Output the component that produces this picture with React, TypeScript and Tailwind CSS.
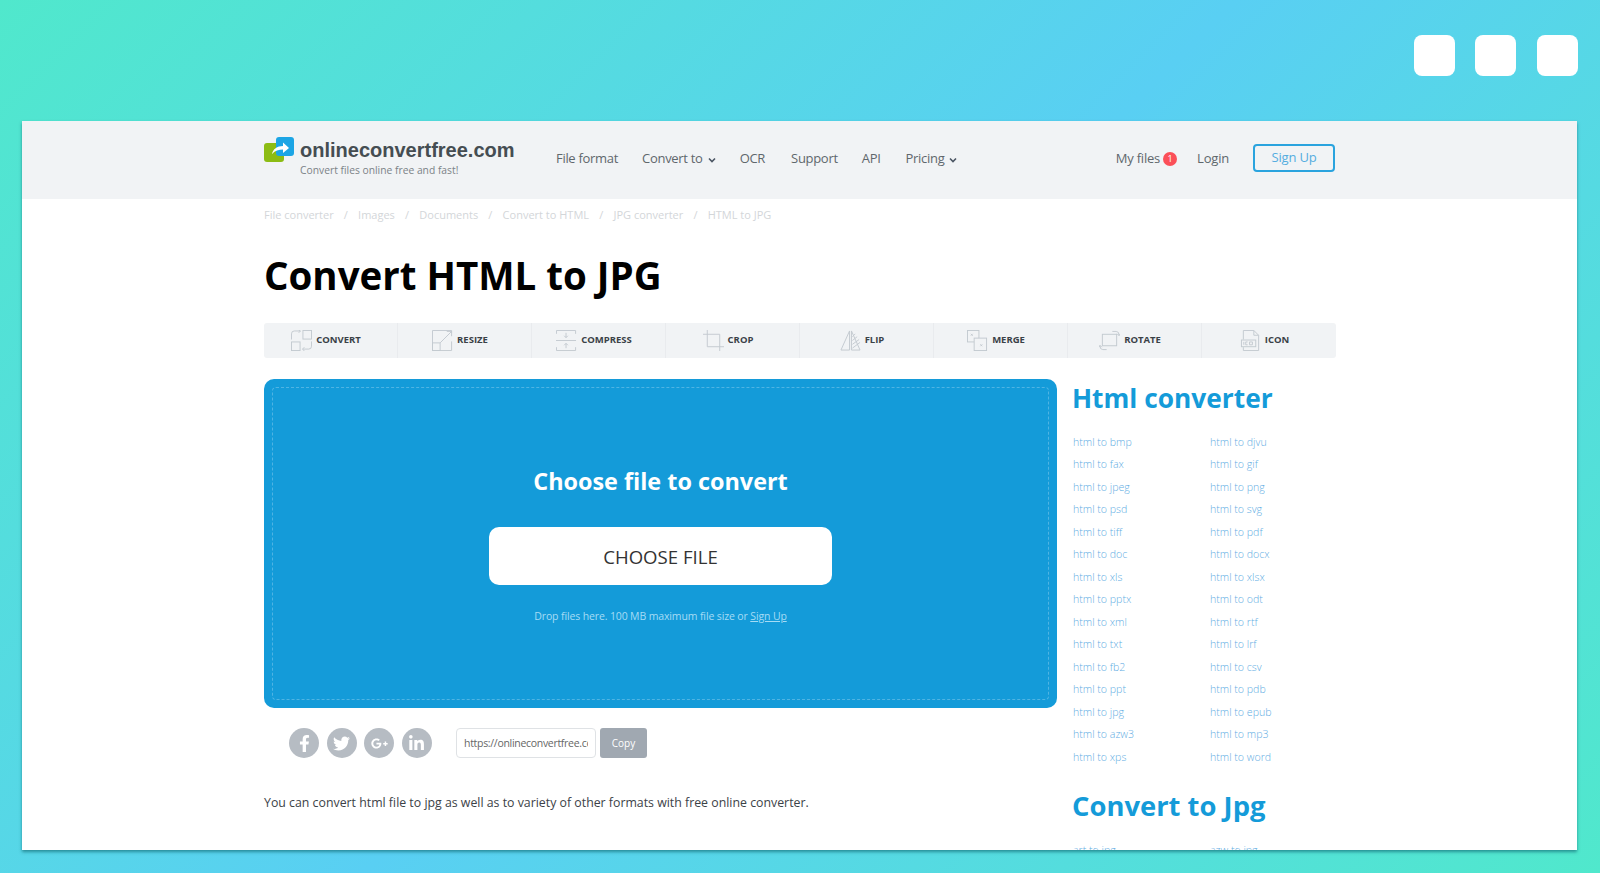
import { FaFacebookF, FaTwitter, FaGooglePlusG, FaLinkedinIn } from 'react-icons/fa';

const stroke = '#c3cad0';

function LogoMark() {
  return (
    <svg width="30" height="25" viewBox="0 0 30 25" className="shrink-0">
      <rect x="0" y="6" width="20" height="19" rx="3" fill="#8cbc14" />
      <rect x="12" y="0" width="18" height="19" rx="3" fill="#1ca5e5" />
      <path d="M8 17c1-5 5-8 11-8V5.500l6 5.500-6 5v-3.500c-4 0-8 1-11 4.500z" fill="#fff" />
    </svg>
  );
}

function TabIcon({ name }: { name: string }) {
  const common = { fill: 'none', stroke, strokeWidth: 1 };
  return (
    <svg width="21" height="21" viewBox="0 0 22 22" className="shrink-0">
      {name === 'convert' && (
        <g {...common}>
          <rect x="12.500" y="0.500" width="9" height="9" />
          <rect x="0.500" y="12.500" width="9" height="9" />
          <path d="M0.500 10V4q0-3 3-3h6M8 0l2 1-2 2M21.500 12v5q0 3-3 3h-6M14 18l-2 2 2 2" />
        </g>
      )}
      {name === 'resize' && (
        <g {...common}>
          <path d="M20.500 12v9.500H0.500V0.500H20.500V3" />
          <rect x="0.500" y="13.500" width="8" height="8" />
          <path d="M8.500 13.500L20.500 1.500M15.500 1.500h5v5" />
        </g>
      )}
      {name === 'compress' && (
        <g {...common}>
          <path d="M0.500 4V0.500h20V4M0.500 18v3.500h20V18M0 11h21M10.500 3v5M8.500 6l2 2 2-2M10.500 19v-5M8.500 16l2-2 2 2" />
        </g>
      )}
      {name === 'crop' && (
        <g {...common}>
          <path d="M4.500 0v17.500H22M0 4.500h17.500V22" />
        </g>
      )}
      {name === 'flip' && (
        <g {...common}>
          <path d="M10 1L1 21h9zM12 1l9 20h-9z" />
          <path d="M13 7l3-3M13 11l5-4M13 15l7-5M13 19l8-6" />
        </g>
      )}
      {name === 'merge' && (
        <g {...common}>
          <rect x="0.500" y="0.500" width="12" height="12" />
          <rect x="7.500" y="8.500" width="13" height="13" fill="#f1f3f5" />
          <path d="M4 4l2 2M6 4L4 6M14 15l2 2M16 15l-2 2" />
        </g>
      )}
      {name === 'rotate' && (
        <g {...common}>
          <rect x="3.500" y="4.500" width="15" height="12" />
          <path d="M14 1.500h4q3 0 3 4M19 4l2 2 1-2M8 20.500H4q-3 0-3-4M3 18l-2-2-1 2" />
        </g>
      )}
      {name === 'icon' && (
        <g {...common}>
          <path d="M3.500 10V0.500h11l5 5V21.500H3.500V18M14.500 0.500v5h5" />
          <rect x="1.500" y="10.500" width="15" height="7" />
          <path d="M4 12.500v3M6 12.500h2M6 15.500h2M6 12.500v3M10 12.500h3v3h-3z" />
        </g>
      )}
    </svg>
  );
}

const tabs = ['convert', 'resize', 'compress', 'crop', 'flip', 'merge', 'rotate', 'icon'];
const crumbs = ['File converter', 'Images', 'Documents', 'Convert to HTML', 'JPG converter', 'HTML to JPG'];
const htmlLinks = [
  'bmp', 'djvu', 'fax', 'gif', 'jpeg', 'png', 'psd', 'svg', 'tiff', 'pdf', 'doc', 'docx', 'xls', 'xlsx', 'pptx',
  'odt', 'xml', 'rtf', 'txt', 'lrf', 'fb2', 'csv', 'ppt', 'pdb', 'jpg', 'epub', 'azw3', 'mp3', 'xps', 'word',
];
const socials = [FaFacebookF, FaTwitter, FaGooglePlusG, FaLinkedinIn];

function Chevron() {
  return (
    <svg width="8" height="6" viewBox="0 0 8 6" className="ml-[5px] mt-px">
      <path d="M1 1.500l3 3 3-3" fill="none" stroke="#4b5563" strokeWidth="1.600" />
    </svg>
  );
}

export default function App() {
  return (
    <div className="h-[873px] overflow-hidden bg-[linear-gradient(135deg,#50e8cc_0%,#59cff3_50%,#50e8cc_100%)] font-['Open_Sans',sans-serif]">
      <div className="flex h-[121px] justify-end gap-5 pr-[22px] pt-[35px]">
        <div className="h-[41px] w-[41px] rounded-lg bg-white" />
        <div className="h-[41px] w-[41px] rounded-lg bg-white" />
        <div className="ml-px h-[41px] w-[41px] rounded-lg bg-white" />
      </div>

      <div className="ml-[22px] mr-[23px] h-[729px] overflow-hidden bg-white shadow-[0_2px_3px_rgba(20,110,120,0.7)]">
        <header className="h-[78px] bg-[#f1f3f5]">
          <div className="ml-[242px] flex h-full w-[1072px] items-center pb-[2px]">
            <div className="flex w-[292px] items-start self-start pt-4">
              <LogoMark />
              <div className="ml-1.5 mt-[2px]">
                <div className="font-['Liberation_Sans',sans-serif] text-[20px] font-bold leading-[22px] text-[#454d52]">onlineconvertfree.com</div>
                <div className="mt-[2px] text-[10.300px] leading-[14px] text-[#7b8287]">Convert files online free and fast!</div>
              </div>
            </div>
            <nav className="flex items-center text-[13px] tracking-[-0.3px] text-[#5f676c]">
              <span className="mr-6">File format</span>
              <span className="mr-6 flex items-center">Convert to<Chevron /></span>
              <span className="mr-[26px]">OCR</span>
              <span className="mr-6">Support</span>
              <span className="mr-[25px]">API</span>
              <span className="flex items-center">Pricing<Chevron /></span>
            </nav>
            <div className="ml-auto mr-px flex items-center text-[13px] tracking-[-0.2px] text-[#5f676c]">
              <span>My files</span>
              <span className="ml-[3px] flex h-[14px] w-[14px] items-center justify-center rounded-full bg-[#fb4f58] text-[9px] text-white">1</span>
              <span className="ml-5">Login</span>
              <button className="ml-6 -mt-[2px] h-7 w-[82px] rounded-[4px] border-2 border-[#2aa3de] text-[13px] text-[#55ade0]">Sign Up</button>
            </div>
          </div>
        </header>

        <div className="ml-[242px] w-[1072px]">
          <div className="flex h-8 items-center gap-[10.200px] text-[11px] text-[#d3d6d9]">
            {crumbs.map((c, i) => (
              <span key={c} className="flex items-center gap-[10.200px]">
                {i > 0 && <span>/</span>}
                {c}
              </span>
            ))}
          </div>

          <div className="flex h-[92px] items-center pb-1">
            <h1 className="text-[38.500px] font-bold leading-none text-black">Convert HTML to JPG</h1>
          </div>

          <div className="grid h-[35px] grid-cols-8 rounded-[3px] bg-[#f1f3f5]">
            {tabs.map((t, i) => (
              <div key={t} className={`flex items-center justify-center gap-1 pr-[9px] ${i < 7 ? 'border-r border-[#e9ebee]' : ''}`}>
                <TabIcon name={t} />
                <span className="text-[9.500px] font-bold uppercase text-[#3a4147]">{t}</span>
              </div>
            ))}
          </div>

          <div className="mt-[21px] flex gap-4">
            <main className="w-[793px] shrink-0">
              <div className="h-[329px] rounded-[10px] bg-[#149bd9] p-2">
                <div className="flex h-full flex-col items-center rounded-[4px] border border-dashed border-[#4fb4e3] pt-[75px]">
                  <h2 className="h-9 text-[23.400px] font-bold leading-9 text-white">Choose file to convert</h2>
                  <button className="mt-[28px] h-[58px] w-[343px] rounded-[10px] bg-white pt-[2px] text-[18.600px] text-[#333]">CHOOSE FILE</button>
                  <p className="mt-[22px] text-[10.500px] leading-[18px] tracking-[-0.13px] text-[#a5dcf5]">
                    Drop files here. 100 MB maximum file size or <span className="underline">Sign Up</span>
                  </p>
                </div>
              </div>

              <div className="mt-[20px] flex items-center pl-[25px]">
                {socials.map((Icon, i) => (
                  <span key={i} className="mr-[7.500px] flex h-[30px] w-[30px] items-center justify-center rounded-full bg-[#b6bcc3] text-[17px] text-white">
                    <Icon />
                  </span>
                ))}
                <input
                  readOnly
                  value="https://onlineconvertfree.com/"
                  className="ml-[17px] h-[30px] w-[140px] rounded-[4px] border border-[#dfe2e5] px-[7px] text-[10.500px] tracking-[-0.3px] text-[#666] outline-none"
                />
                <button className="ml-[4px] h-[30px] w-[47px] rounded-[3px] bg-[#a0a8b1] text-[10px] text-white">Copy</button>
              </div>

              <p className="mt-[35px] text-[12.340px] leading-5 text-[#3c4247]">
                You can convert html file to jpg as well as to variety of other formats with free online converter.
              </p>
            </main>

            <aside className="flex-1 pt-px">
              <h2 className="-ml-px h-9 text-[26.300px] font-bold leading-9 text-[#149bd9]">Html converter</h2>
              <div className="mt-[14.500px] grid grid-cols-[137px_1fr] auto-rows-[22.500px]">
                {htmlLinks.map((l) => (
                  <a key={l} className="text-[10.600px] font-light leading-[22.500px] text-[#5fade3]">html to {l}</a>
                ))}
              </div>
              <h2 className="-ml-px mt-[20px] h-9 text-[27.400px] font-bold leading-9 text-[#149bd9]">Convert to Jpg</h2>
              <div className="mt-[15px] grid grid-cols-[137px_1fr] auto-rows-[22.500px]">
                <a className="text-[10.600px] font-light leading-[22.500px] text-[#5fade3]">art to jpg</a>
                <a className="text-[10.600px] font-light leading-[22.500px] text-[#5fade3]">azw to jpg</a>
              </div>
            </aside>
          </div>
        </div>
      </div>
    </div>
  );
}
